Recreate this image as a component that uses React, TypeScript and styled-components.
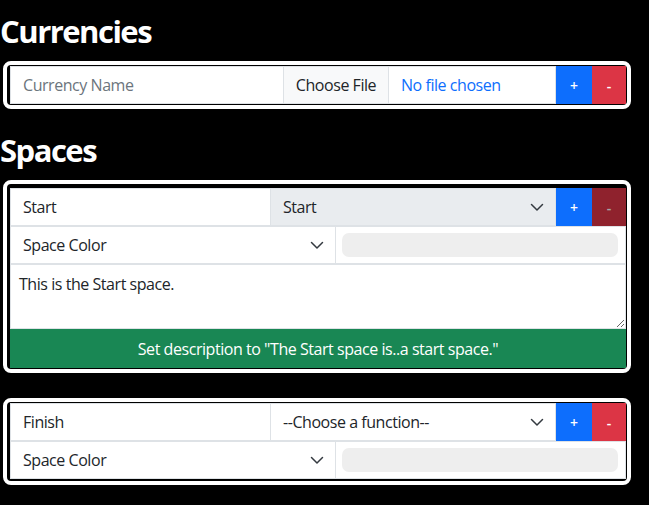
import React from "react";
import styled, { createGlobalStyle } from "styled-components";

const Global = createGlobalStyle`
  html, body { margin: 0; padding: 0; background: #000; }
  body { font-family: "Segoe UI", "Open Sans", sans-serif; color: #212529; }
  * { box-sizing: border-box; }
`;

const Page = styled.div`
  width: 649px;
  height: 505px;
  overflow: hidden;
  background: #000;
  padding-top: 12px;
`;

const Heading = styled.h1<{ $top?: number }>`
  margin: ${(p) => p.$top ?? 0}px 0 11px 0;
  font-size: 31px;
  line-height: 38px;
  font-weight: 700;
  color: #fff;
  letter-spacing: -1.5px;
`;

const Card = styled.div<{ $gap?: number; $pt?: number; $pb?: number }>`
  width: 628px;
  margin: 0 0 ${(p) => p.$gap ?? 0}px 3px;
  border: 4px solid #fff;
  border-radius: 8px;
  padding: ${(p) => p.$pt ?? 1}px 1px ${(p) => p.$pb ?? 1}px 3px;
  background: #000;
  display: flex;
  flex-direction: column;
`;

const Row = styled.div`
  display: flex;
  height: 38px;
  font-size: 16px;
  letter-spacing: -0.45px;
`;

const Field = styled.div<{ $w?: number; $muted?: boolean; $disabled?: boolean }>`
  ${(p) => (p.$w ? `width: ${p.$w}px; flex: none;` : "flex: 1;")}
  height: 100%;
  display: flex;
  align-items: center;
  padding: 0 12px;
  background: ${(p) => (p.$disabled ? "#e9ecef" : "#fff")};
  border: 1px solid #dee2e6;
  margin-left: -1px;
  &:first-child { margin-left: 0; }
  color: ${(p) => (p.$muted ? "#6c757d" : "#212529")};
  white-space: nowrap;
`;

const SelectField = styled(Field)`
  justify-content: space-between;
  padding-right: 11px;
`;

const Chevron = () => (
  <svg width="14" height="10" viewBox="0 0 14 10" fill="none">
    <path d="M1.5 2.5 7 8l5.5-5.5" stroke="#343a40" strokeWidth="1.5" strokeLinecap="round" strokeLinejoin="round" />
  </svg>
);

const FileButton = styled.div`
  width: 106px;
  flex: none;
  height: 100%;
  display: flex;
  align-items: center;
  justify-content: center;
  background: #f8f9fa;
  border: 1px solid #dee2e6;
  margin-left: -1px;
  color: #212529;
`;

const FileName = styled.div`
  flex: 1;
  height: 100%;
  display: flex;
  align-items: center;
  padding-left: 12px;
  background: #fff;
  border: 1px solid #dee2e6;
  border-left: none;
  color: #0d6efd;
`;

const Btn = styled.div<{ $variant: "add" | "remove"; $w: number; $disabled?: boolean }>`
  width: ${(p) => p.$w}px;
  flex: none;
  height: 100%;
  display: flex;
  align-items: center;
  justify-content: center;
  background: ${(p) => (p.$variant === "add" ? "#0d6efd" : "#dc3545")};
  color: #fff;
  font-size: 14px;
  font-weight: 600;
  letter-spacing: 0;
  opacity: ${(p) => (p.$disabled ? 0.65 : 1)};
`;

const ColorCell = styled.div`
  flex: 1;
  height: 100%;
  background: #fff;
  border: 1px solid #dee2e6;
  margin-left: -1px;
  padding: 6px 7px 6px 6px;
  display: flex;
`;

const Swatch = styled.div`
  flex: 1;
  background: #eeeeee;
  border-radius: 7px;
`;

const Area = styled.textarea`
  display: block;
  width: 100%;
  height: 65px;
  margin: 0;
  border: 1px solid #dee2e6;
  padding: 7px 8px;
  font-family: "Segoe UI", "Open Sans", sans-serif;
  font-size: 16px;
  letter-spacing: -0.45px;
  line-height: 24px;
  color: #212529;
  background: #fff;
  resize: vertical;
  outline: none;
`;

const ActionButton = styled.div`
  height: 39px;
  display: flex;
  align-items: center;
  justify-content: center;
  background: #198754;
  color: #fff;
  font-size: 16px;
  letter-spacing: -0.45px;
`;

export default function App() {
  return (
    <Page>
      <Global />
      <Heading>Currencies</Heading>
      <Card>
        <Row>
          <Field $w={274} $muted>Currency Name</Field>
          <FileButton>Choose File</FileButton>
          <FileName>No file chosen</FileName>
          <Btn $variant="add" $w={36}>+</Btn>
          <Btn $variant="remove" $w={34}>-</Btn>
        </Row>
      </Card>
      <Heading $top={22}>Spaces</Heading>
      <Card $gap={25} $pt={4} $pb={1}>
        <Row>
          <Field $w={261}>Start</Field>
          <SelectField $disabled>
            Start
            <Chevron />
          </SelectField>
          <Btn $variant="add" $w={36}>+</Btn>
          <Btn $variant="remove" $w={34} $disabled>-</Btn>
        </Row>
        <Row>
          <SelectField $w={326}>
            Space Color
            <Chevron />
          </SelectField>
          <ColorCell>
            <Swatch />
          </ColorCell>
        </Row>
        <Area defaultValue="This is the Start space." />
        <ActionButton>Set description to "The Start space is..a start space."</ActionButton>
      </Card>
      <Card $pt={1} $pb={2}>
        <Row>
          <Field $w={261}>Finish</Field>
          <SelectField>
            --Choose a function--
            <Chevron />
          </SelectField>
          <Btn $variant="add" $w={36}>+</Btn>
          <Btn $variant="remove" $w={34}>-</Btn>
        </Row>
        <Row>
          <SelectField $w={326}>
            Space Color
            <Chevron />
          </SelectField>
          <ColorCell>
            <Swatch />
          </ColorCell>
        </Row>
      </Card>
    </Page>
  );
}
